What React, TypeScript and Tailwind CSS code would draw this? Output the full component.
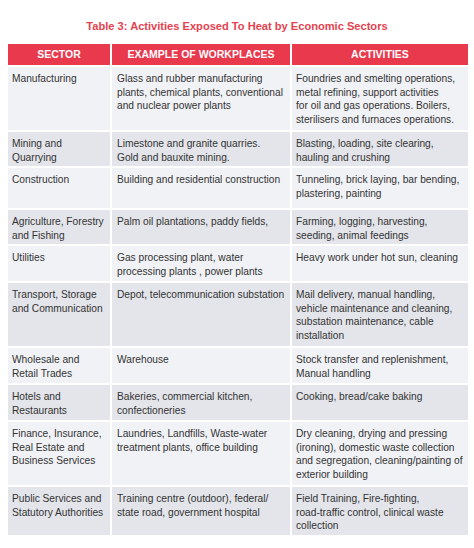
import React from 'react';

interface Row {
  sector: string[];
  workplaces: string[];
  activities: string[];
  h: string;
}

const rows: Row[] = [
  {
    sector: ['Manufacturing'],
    workplaces: ['Glass and rubber manufacturing', 'plants, chemical plants, conventional', 'and nuclear power plants'],
    activities: [
      'Foundries and smelting operations,',
      'metal refining, support activities',
      'for oil and gas operations. Boilers,',
      'sterilisers and furnaces operations.',
    ],
    h: 'h-[63px]',
  },
  {
    sector: ['Mining and', 'Quarrying'],
    workplaces: ['Limestone and granite quarries.', 'Gold and bauxite mining.'],
    activities: ['Blasting, loading, site clearing,', 'hauling and crushing'],
    h: 'h-[34px]',
  },
  {
    sector: ['Construction'],
    workplaces: ['Building and residential construction'],
    activities: ['Tunneling, brick laying, bar bending,', 'plastering, painting'],
    h: 'h-[40px]',
  },
  {
    sector: ['Agriculture, Forestry', 'and Fishing'],
    workplaces: ['Palm oil plantations, paddy fields,'],
    activities: ['Farming, logging, harvesting,', 'seeding, animal feedings'],
    h: 'h-[34px]',
  },
  {
    sector: ['Utilities'],
    workplaces: ['Gas processing plant, water', 'processing plants , power plants'],
    activities: ['Heavy work under hot sun, cleaning'],
    h: 'h-[35px]',
  },
  {
    sector: ['Transport, Storage', 'and Communication'],
    workplaces: ['Depot, telecommunication substation'],
    activities: [
      'Mail delivery, manual handling,',
      'vehicle maintenance and cleaning,',
      'substation maintenance, cable',
      'installation',
    ],
    h: 'h-[63px]',
  },
  {
    sector: ['Wholesale and', 'Retail Trades'],
    workplaces: ['Warehouse'],
    activities: ['Stock transfer and replenishment,', 'Manual handling'],
    h: 'h-[35px]',
  },
  {
    sector: ['Hotels and', 'Restaurants'],
    workplaces: ['Bakeries, commercial kitchen,', 'confectioneries'],
    activities: ['Cooking, bread/cake baking'],
    h: 'h-[35px]',
  },
  {
    sector: ['Finance, Insurance,', 'Real Estate and', 'Business Services'],
    workplaces: ['Laundries, Landfills, Waste-water', 'treatment plants, office building'],
    activities: [
      'Dry cleaning, drying and pressing',
      '(ironing), domestic waste collection',
      'and segregation, cleaning/painting of',
      'exterior building',
    ],
    h: 'h-[63px]',
  },
  {
    sector: ['Public Services and', 'Statutory Authorities'],
    workplaces: ['Training centre (outdoor), federal/', 'state road, government hospital'],
    activities: ['Field Training, Fire-fighting,', 'road-traffic control, clinical waste', 'collection'],
    h: 'h-[48px]',
  },
];

const Lines: React.FC<{ lines: string[] }> = ({ lines }) => (
  <>
    {lines.map((l, i) => (
      <div key={i} className="whitespace-nowrap">
        {l}
      </div>
    ))}
  </>
);

const App: React.FC = () => {
  return (
    <div className="w-[474px] h-[548px] bg-white overflow-hidden font-['Liberation_Sans',Arial,sans-serif]">
      <h1 className="pt-[18px] text-center text-[11.1px] leading-[16px] font-bold text-[#e4424f]">
        Table 3: Activities Exposed To Heat by Economic Sectors
      </h1>
      <div className="ml-[8px] mt-[10px] grid grid-cols-[102px_178px_176px] gap-[2px] text-[10.2px] leading-[13.7px] text-[#333]">
        {['SECTOR', 'EXAMPLE OF WORKPLACES', 'ACTIVITIES'].map((h) => (
          <div
            key={h}
            className="h-[21px] flex items-center justify-center bg-[#e8394d] text-white font-bold text-[10.5px]"
          >
            {h}
          </div>
        ))}
        {rows.map((r, i) => {
          const bg = i % 2 === 0 ? 'bg-[#f1f2f6]' : 'bg-[#e3e5ea]';
          return (
            <React.Fragment key={r.sector.join(' ')}>
              <div className={`${bg} ${r.h} pl-[4px] pt-[5px]`}>
                <Lines lines={r.sector} />
              </div>
              <div className={`${bg} ${r.h} pl-[5px] pt-[5px]`}>
                <Lines lines={r.workplaces} />
              </div>
              <div className={`${bg} ${r.h} pl-[4px] pt-[5px]`}>
                <Lines lines={r.activities} />
              </div>
            </React.Fragment>
          );
        })}
      </div>
    </div>
  );
};

export default App;
